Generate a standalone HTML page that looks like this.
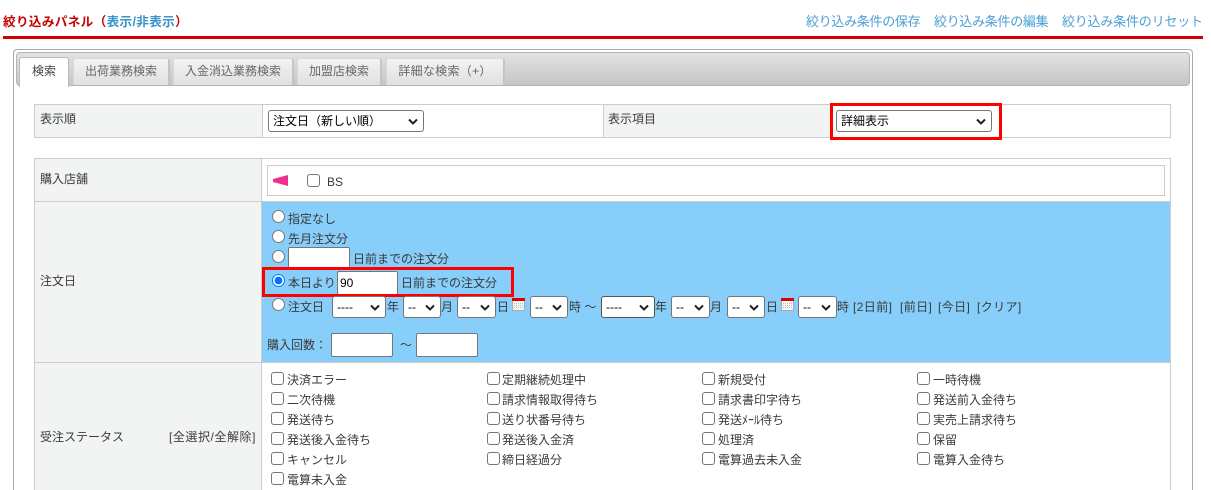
<!DOCTYPE html>
<html lang="ja"><head><meta charset="utf-8"><title>絞り込みパネル</title>
<style>
html,body{margin:0;padding:0;background:#fff;width:1211px;height:490px;overflow:hidden}
body{position:relative;font-family:"Liberation Sans","Noto Sans CJK JP",sans-serif;font-size:12px;color:#3a3a3a}
.a,.t,select,input,.b{position:absolute;box-sizing:border-box}
.t{white-space:nowrap;line-height:16px;height:16px}
select{font-family:"Liberation Sans","Noto Sans CJK JP",sans-serif;font-size:12px;height:22px;background:#fff;margin:0;color:#000;-webkit-appearance:none;appearance:none;border:1px solid #767676;border-radius:3px;padding:0 0 0 4px}
input[type=text]{border:1px solid #767676;border-radius:2px;background:#fff;margin:0;padding:1px 2px;font-size:12px;font-family:"Liberation Sans",sans-serif;color:#000}
input[type=radio]{margin:0;width:13px;height:13px}
input[type=checkbox]{margin:0;width:13px;height:13px;-webkit-appearance:none;appearance:none;background:#fff;border:1px solid #767676;border-radius:3px}
.tab{position:absolute;box-sizing:border-box;text-align:center;line-height:25px;color:#666;border-radius:3px 3px 0 0;background:linear-gradient(#f3f3f3,#e0e0e0);top:58px;height:27px;border:1px solid #d8d8d8;border-right:2px solid #c4c4c4;border-bottom:0}
.l{color:#4a9fd4}
.v{position:absolute;pointer-events:none}
.w{letter-spacing:.4px}
</style></head><body>
<div class="t" style="left:3px;top:14px;color:#c80000;font-size:12.6px;font-weight:bold;letter-spacing:.35px">絞り込みパネル（<span style="color:#3a93c8">表示/非表示</span>）</div>
<div class="t l" style="left:806px;top:14px;font-size:13px;letter-spacing:-.3px">絞り込み条件の保存</div>
<div class="t l" style="left:934px;top:14px;font-size:13px;letter-spacing:-.3px">絞り込み条件の編集</div>
<div class="t l" style="left:1062px;top:14px;font-size:13px;letter-spacing:-.2px">絞り込み条件のリセット</div>
<div class="a" style="left:3px;top:36px;width:1200px;height:3px;background:#d00000"></div>

<div class="a" style="left:13px;top:49px;width:1180px;height:460px;border:1px solid #aaa;border-radius:4px"></div>
<div class="a" style="left:16px;top:52px;width:1174px;height:34px;background:linear-gradient(#e2e2e2,#c6c6c6);border:1px solid #b5b5b5;border-radius:4px"></div>
<div class="tab" style="left:19px;top:57px;width:50px;height:30px;background:#fff;border:1px solid #bbb;border-bottom:0;color:#444;line-height:27px">検索</div>
<div class="tab" style="left:73px;width:97px">出荷業務検索</div>
<div class="tab" style="left:173px;width:121px">入金消込業務検索</div>
<div class="tab" style="left:297px;width:85px">加盟店検索</div>
<div class="tab" style="left:386px;width:119px;letter-spacing:.3px">詳細な検索（+）</div>

<div class="a" style="left:34px;top:104px;width:1137px;height:34px;border:1px solid #ccc"></div>
<div class="a" style="left:35px;top:105px;width:228px;height:32px;background:#f2f4f4;border-right:1px solid #ccc"></div>
<div class="a" style="left:603px;top:105px;width:227px;height:32px;background:#f2f4f4;border-left:1px solid #ccc"></div>
<div class="t" style="left:40px;top:111px">表示順</div>
<select style="left:268px;top:110px;width:156px"><option>注文日（新しい順）</option></select>
<svg class="v" style="left:408px;top:118px" width="10" height="7"><path d="M1 1.5L5 5.5L9 1.5" fill="none" stroke="#222" stroke-width="2"/></svg>
<div class="t" style="left:608px;top:111px">表示項目</div>
<select style="left:836px;top:110px;width:156px"><option>詳細表示</option></select>
<svg class="v" style="left:976px;top:118px" width="10" height="7"><path d="M1 1.5L5 5.5L9 1.5" fill="none" stroke="#222" stroke-width="2"/></svg>
<div class="a" style="left:830px;top:103px;width:172px;height:37px;border:3px solid #f00"></div>

<div class="a" style="left:34px;top:158px;width:1137px;height:340px;border:1px solid #ccc;border-bottom:0"></div>
<div class="a" style="left:35px;top:159px;width:227px;height:331px;background:#f2f4f4;border-right:1px solid #ccc"></div>
<div class="a" style="left:35px;top:201px;width:1135px;height:1px;background:#ccc"></div>
<div class="a" style="left:35px;top:362px;width:1135px;height:1px;background:#ccc"></div>
<div class="a" style="left:262px;top:202px;width:908px;height:160px;background:#87cefa"></div>

<div class="t" style="left:40px;top:171px">購入店舗</div>
<div class="a" style="left:267px;top:165px;width:898px;height:31px;border:1px solid #ccc;background:#fff"></div>
<svg class="a" style="left:273px;top:175px" width="15" height="11"><path d="M0 4L15 0V11L0 7Z" fill="#ee2f8f"/></svg>
<input class="a" type="checkbox" style="left:307px;top:174px">
<div class="t" style="left:327px;top:174px">BS</div>

<div class="t" style="left:40px;top:273px">注文日</div>
<input class="a" type="radio" style="left:272px;top:210px"><div class="t" style="left:288px;top:211px">指定なし</div>
<input class="a" type="radio" style="left:272px;top:230px"><div class="t" style="left:288px;top:231px">先月注文分</div>
<input class="a" type="radio" style="left:272px;top:250px"><input type="text" style="left:288px;top:247px;width:62px;height:23px"><div class="t" style="left:353px;top:251px">日前までの注文分</div>
<input class="a" type="radio" checked style="left:272px;top:274px"><div class="t" style="left:288px;top:275px">本日より</div><input type="text" value="90" style="left:337px;top:271px;width:61px;height:24px"><div class="t" style="left:401px;top:275px">日前までの注文分</div>
<div class="a" style="left:262px;top:267px;width:252px;height:30px;border:3px solid #f00"></div>

<input class="a" type="radio" style="left:272px;top:298px"><div class="t" style="left:288px;top:299px">注文日</div>
<select style="left:332px;top:296px;width:54px"><option>----</option></select><svg class="v" style="left:370px;top:304px" width="10" height="7"><path d="M1 1.5L5 5.5L9 1.5" fill="none" stroke="#222" stroke-width="2"/></svg><div class="t" style="left:387px;top:299px">年</div>
<select style="left:403px;top:296px;width:38px"><option>--</option></select><svg class="v" style="left:425px;top:304px" width="10" height="7"><path d="M1 1.5L5 5.5L9 1.5" fill="none" stroke="#222" stroke-width="2"/></svg><div class="t" style="left:441px;top:299px">月</div>
<select style="left:457px;top:296px;width:39px"><option>--</option></select><svg class="v" style="left:480px;top:304px" width="10" height="7"><path d="M1 1.5L5 5.5L9 1.5" fill="none" stroke="#222" stroke-width="2"/></svg><div class="t" style="left:497px;top:299px">日</div>
<svg class="a" style="left:512px;top:298px" width="13" height="13"><rect x=".5" y=".5" width="12" height="12" fill="#f6f6f6" stroke="#aaa"/><rect width="13" height="3" fill="#d00"/><path d="M2 5.5h9M2 7.5h9M2 9.5h9" stroke="#bbb" stroke-dasharray="1 1"/></svg>
<select style="left:530px;top:296px;width:38px"><option>--</option></select><svg class="v" style="left:552px;top:304px" width="10" height="7"><path d="M1 1.5L5 5.5L9 1.5" fill="none" stroke="#222" stroke-width="2"/></svg><div class="t" style="left:569px;top:299px">時 ～</div>
<select style="left:601px;top:296px;width:54px;border-color:#555"><option>----</option></select><svg class="v" style="left:639px;top:304px" width="10" height="7"><path d="M1 1.5L5 5.5L9 1.5" fill="none" stroke="#222" stroke-width="2"/></svg><div class="t" style="left:655px;top:299px">年</div>
<select style="left:671px;top:296px;width:39px"><option>--</option></select><svg class="v" style="left:694px;top:304px" width="10" height="7"><path d="M1 1.5L5 5.5L9 1.5" fill="none" stroke="#222" stroke-width="2"/></svg><div class="t" style="left:710px;top:299px">月</div>
<select style="left:727px;top:296px;width:38px"><option>--</option></select><svg class="v" style="left:749px;top:304px" width="10" height="7"><path d="M1 1.5L5 5.5L9 1.5" fill="none" stroke="#222" stroke-width="2"/></svg><div class="t" style="left:766px;top:299px">日</div>
<svg class="a" style="left:781px;top:298px" width="13" height="13"><rect x=".5" y=".5" width="12" height="12" fill="#f6f6f6" stroke="#aaa"/><rect width="13" height="3" fill="#d00"/><path d="M2 5.5h9M2 7.5h9M2 9.5h9" stroke="#bbb" stroke-dasharray="1 1"/></svg>
<select style="left:798px;top:296px;width:39px"><option>--</option></select><svg class="v" style="left:821px;top:304px" width="10" height="7"><path d="M1 1.5L5 5.5L9 1.5" fill="none" stroke="#222" stroke-width="2"/></svg><div class="t" style="left:837px;top:299px">時</div>
<div class="t w" style="left:853px;top:299px">[2日前]</div>
<div class="t w" style="left:900px;top:299px">[前日]</div>
<div class="t w" style="left:938px;top:299px">[今日]</div>
<div class="t w" style="left:977px;top:299px">[クリア]</div>
<div class="t" style="left:267px;top:337px">購入回数：</div>
<input type="text" style="left:331px;top:333px;width:62px;height:24px">
<div class="t" style="left:400px;top:337px">～</div>
<input type="text" style="left:416px;top:333px;width:62px;height:24px">

<div class="t" style="left:40px;top:429px">受注ステータス</div>
<div class="t" style="left:169px;top:429px;letter-spacing:.55px">[全選択/全解除]</div>

<input class="a" type="checkbox" style="left:271px;top:372px"><div class="t" style="left:287px;top:372px">決済エラー</div>
<input class="a" type="checkbox" style="left:487px;top:372px"><div class="t" style="left:502px;top:372px">定期継続処理中</div>
<input class="a" type="checkbox" style="left:702px;top:372px"><div class="t" style="left:718px;top:372px">新規受付</div>
<input class="a" type="checkbox" style="left:917px;top:372px"><div class="t" style="left:933px;top:372px">一時待機</div>

<input class="a" type="checkbox" style="left:271px;top:392px"><div class="t" style="left:287px;top:392px">二次待機</div>
<input class="a" type="checkbox" style="left:487px;top:392px"><div class="t" style="left:502px;top:392px">請求情報取得待ち</div>
<input class="a" type="checkbox" style="left:702px;top:392px"><div class="t" style="left:718px;top:392px">請求書印字待ち</div>
<input class="a" type="checkbox" style="left:917px;top:392px"><div class="t" style="left:933px;top:392px">発送前入金待ち</div>

<input class="a" type="checkbox" style="left:271px;top:412px"><div class="t" style="left:287px;top:412px">発送待ち</div>
<input class="a" type="checkbox" style="left:487px;top:412px"><div class="t" style="left:502px;top:412px">送り状番号待ち</div>
<input class="a" type="checkbox" style="left:702px;top:412px"><div class="t" style="left:718px;top:412px">発送ﾒｰﾙ待ち</div>
<input class="a" type="checkbox" style="left:917px;top:412px"><div class="t" style="left:933px;top:412px">実売上請求待ち</div>

<input class="a" type="checkbox" style="left:271px;top:432px"><div class="t" style="left:287px;top:432px">発送後入金待ち</div>
<input class="a" type="checkbox" style="left:487px;top:432px"><div class="t" style="left:502px;top:432px">発送後入金済</div>
<input class="a" type="checkbox" style="left:702px;top:432px"><div class="t" style="left:718px;top:432px">処理済</div>
<input class="a" type="checkbox" style="left:917px;top:432px"><div class="t" style="left:933px;top:432px">保留</div>

<input class="a" type="checkbox" style="left:271px;top:452px"><div class="t" style="left:287px;top:452px">キャンセル</div>
<input class="a" type="checkbox" style="left:487px;top:452px"><div class="t" style="left:502px;top:452px">締日経過分</div>
<input class="a" type="checkbox" style="left:702px;top:452px"><div class="t" style="left:718px;top:452px">電算過去未入金</div>
<input class="a" type="checkbox" style="left:917px;top:452px"><div class="t" style="left:933px;top:452px">電算入金待ち</div>

<input class="a" type="checkbox" style="left:271px;top:472px"><div class="t" style="left:287px;top:472px">電算未入金</div>
</body></html>
